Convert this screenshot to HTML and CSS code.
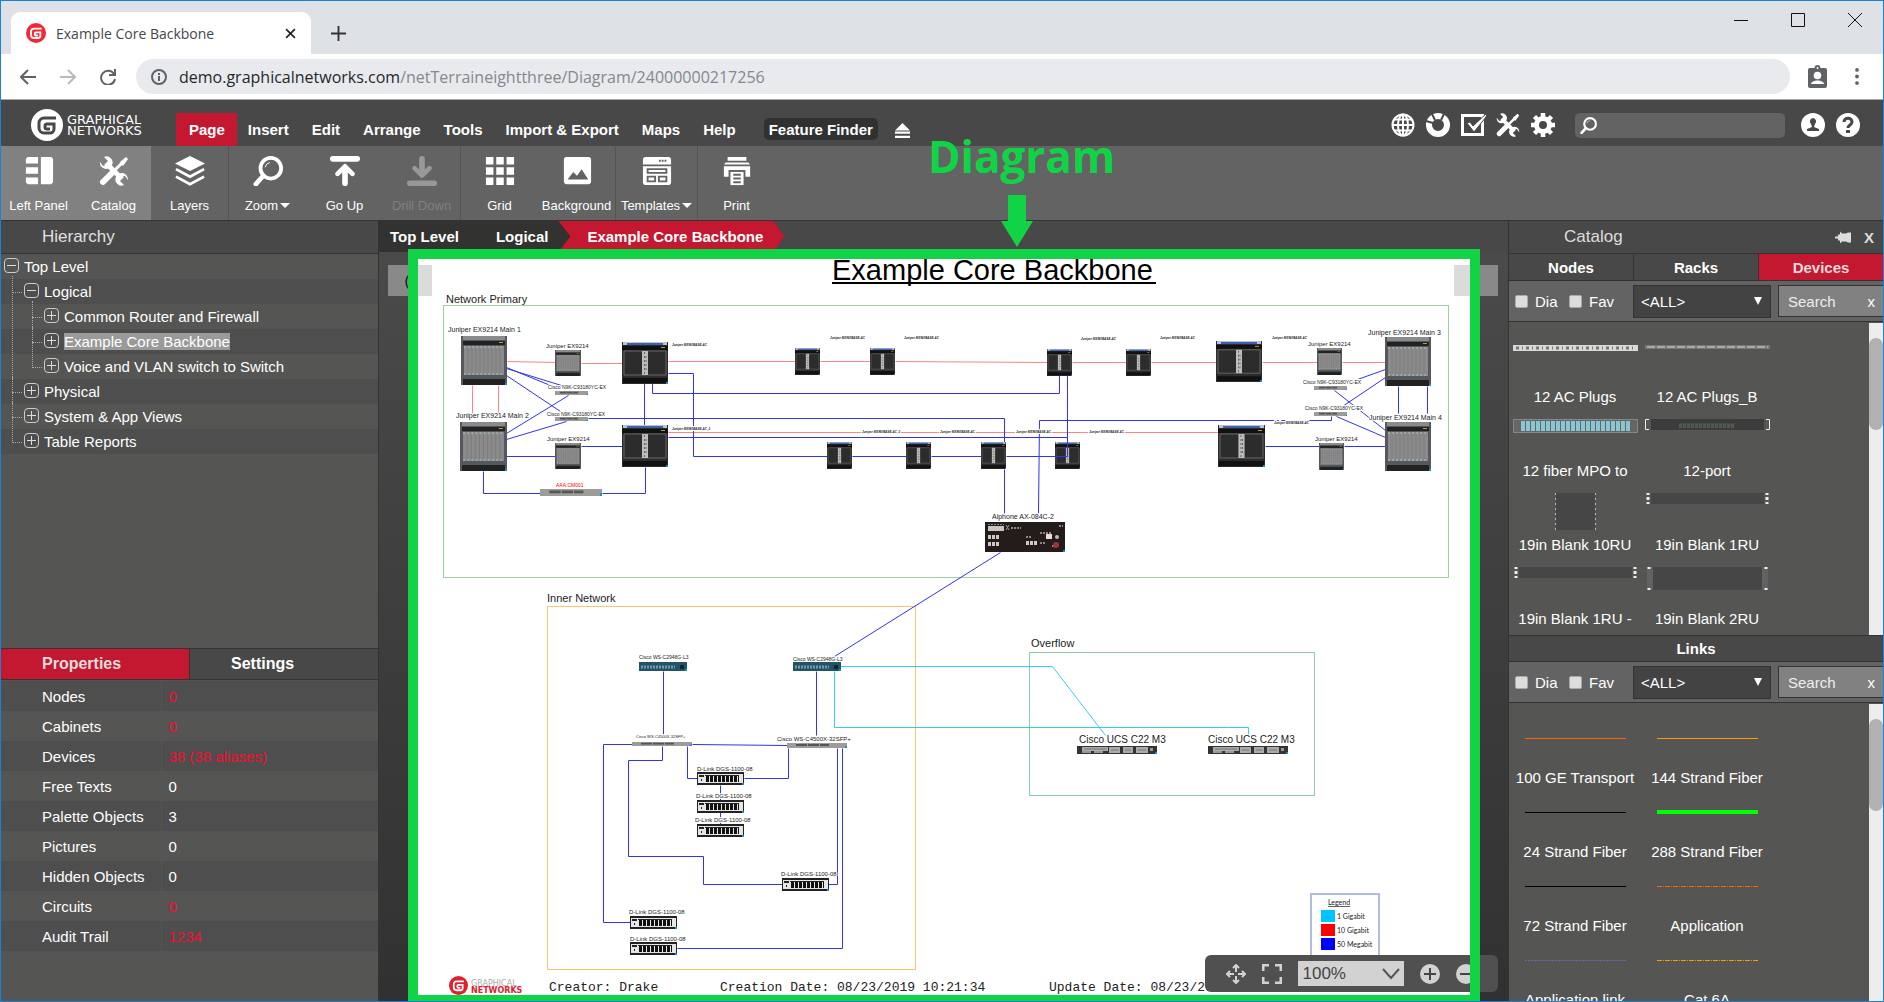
FILE: index.html
```html
<!DOCTYPE html>
<html lang="en">
<head>
<meta charset="utf-8">
<title>Example Core Backbone</title>
<link rel="stylesheet" href="styles.css">
</head>
<body>
<svg class="defs" aria-hidden="true">
  <symbol id="brand" viewBox="0 0 32 32"><circle cx="16" cy="16" r="16"/><path class="cut" d="M25 9H13a5 5 0 0 0-5 5v5a5 5 0 0 0 5 5h6a4 4 0 0 0 4-4v-5h-7a2 2 0 0 0-2 2v1a2 2 0 0 0 2 2h3"/></symbol>
  <symbol id="tools" viewBox="0 0 30 30"><path d="M7 7 23 23" stroke="currentColor" stroke-width="5"/><path fill="currentColor" d="M1 6a6 6 0 0 0 9 6l3-3a6 6 0 0 0-8-8l4 4-1 4-4 1zM29 24a6 6 0 0 0-9-6l-3 3a6 6 0 0 0 8 8l-4-4 1-4 4-1z"/><path d="M4 26 14 16" stroke="currentColor" stroke-width="6" stroke-linecap="round"/><path d="M13 17 24 6" stroke="currentColor" stroke-width="3"/><path d="m21 6 6-5 2 2-5 7z" fill="currentColor"/></symbol>
  <symbol id="glass" viewBox="0 0 32 32"><circle cx="19" cy="13" r="11" fill="none" stroke="currentColor" stroke-width="4"/><path d="M13 12a6 6 0 0 1 5-5" fill="none" stroke="currentColor"/><path d="M3 30 11 21" stroke="currentColor" stroke-width="5" stroke-linecap="round"/></symbol>
  <symbol id="chassis" viewBox="0 0 46 49" preserveAspectRatio="none"><path fill="#55585c" d="M0 0h46v49H0z"/><path fill="#8b8b8b" d="M2 0h42v4H2zM3 10h40v29H3z"/><path fill="#222" d="M2 5h42v4H2zM2 43h42v6H2z"/><path stroke="#7c7c7c" d="M7 10v29M11 10v29M15 10v29M19 10v29M23 10v29M27 10v29M31 10v29M35 10v29M39 10v29"/><path stroke="#a9c4cc" stroke-dasharray="2 2" d="M3 11h40M3 38h40"/><path fill="#b7a339" d="M38 6h4v1h-4z"/><path fill="#1590cf" d="M44 47h2v2h-2z"/></symbol>
  <symbol id="router" viewBox="0 0 46 42" preserveAspectRatio="none"><path fill="#2c2c2c" d="M0 0h46v42H0z"/><path fill="#bcc3d2" d="M1 0h44v3H1z"/><path fill="#3d5fae" d="M5 1h36v2H5z"/><path fill="#111" d="M0 4h46v4H0zM1 36h44v5H1z"/><path stroke="#666" fill="none" d="M2 9h42v24H2z"/><path fill="#bdbdbd" d="M20 9h6v24h-6z"/><path stroke="#666" stroke-dasharray="2 2" d="M22.500 10v22M24 14v16"/><path fill="#b7a339" d="M39 5h4v1h-4z"/><path fill="#1590cf" d="M44 40h2v2h-2z"/></symbol>
  <symbol id="slim" viewBox="0 0 60 5" preserveAspectRatio="none"><path fill="#9c9d98" d="M0 0h60v5H0z"/><path stroke="#555" stroke-width="2" stroke-dasharray="11 1" d="M9 2h33"/><path fill="#1590cf" d="M58 3h2v2h-2z"/></symbol>
  <symbol id="c2948" viewBox="0 0 48 9" preserveAspectRatio="none"><path fill="#215469" d="M0 0h48v9H0z"/><path stroke="#7b99a5" stroke-width="3" stroke-dasharray="2 1" d="M2 5h34"/><path fill="#10242e" d="M41 3h4v4h-4z"/><path fill="#1590cf" d="M46 7h2v2h-2z"/></symbol>
  <symbol id="dlink" viewBox="0 0 47 13"><path fill="#222" d="M0 0h47v13H0z"/><path fill="#e6e6e6" d="M1 2h45v9H1z"/><path stroke="#111" stroke-width="6" stroke-dasharray="3 1" d="M9 7h33"/><path fill="#222" d="M2 3h5v2H2zM4 7h1v2H4zM8 3h34v1H8z"/><path fill="#1590cf" d="M45 11h2v2h-2z"/></symbol>
  <symbol id="ucs" viewBox="0 0 80 8"><path fill="#333" d="M0 0h80v8H0z"/><path fill="#aaa" d="M5 1h26v4H5zM32 1h11v6H32zM46 1h10v6H46zM59 1h12v6H59z"/><path fill="#999" d="M5 5h9v2H5zM17 5h9v2h-9zM73 2h3v3h-3z"/><path stroke="#777" d="M7 3h22M34 4h7M48 4h6M61 4h8"/><path fill="#1590cf" d="M78 6h2v2h-2z"/></symbol>
</svg>

<header class="browser">
  <div class="tabstrip">
    <div class="tab"><svg class="favicon"><use href="#brand"/></svg><span>Example Core Backbone</span>
      <button class="tab-close" aria-label="Close tab"><svg viewBox="0 0 10 10"><path d="M1 1l8 8M9 1l-8 8"/></svg></button></div>
    <button class="newtab" aria-label="New tab"><svg viewBox="0 0 16 16"><path d="M8 0v16M0 8h16"/></svg></button>
    <div class="winctl">
      <button aria-label="Minimize"><svg viewBox="0 0 14 14"><path d="M0 7.500h14"/></svg></button>
      <button aria-label="Maximize"><svg viewBox="0 0 14 14"><path d="M.5.5h13v13H.5z"/></svg></button>
      <button aria-label="Close"><svg viewBox="0 0 14 14"><path d="M0 0l14 14M14 0 0 14"/></svg></button>
    </div>
  </div>
  <div class="navbar">
    <button aria-label="Back"><svg viewBox="0 0 16 16"><path d="M16 8H1M8 1 1 8l7 7"/></svg></button>
    <button class="off" aria-label="Forward"><svg viewBox="0 0 16 16"><path d="M0 8h15M8 1l7 7-7 7"/></svg></button>
    <button aria-label="Reload"><svg viewBox="0 0 16 16"><path d="M14 5a7 7 0 1 0 1 5M15 0v6H9"/></svg></button>
    <div class="omnibox"><svg class="info" viewBox="0 0 16 16"><circle cx="8" cy="8" r="7"/><path d="M8 7v5M8 4v2"/></svg>
      <div role="textbox" aria-label="Address">demo.graphicalnetworks.com<span>/netTerraineightthree/Diagram/24000000217256</span></div></div>
    <svg class="badge" viewBox="0 0 20 24"><path fill="#5f6368" d="M2 3h5a3 3 0 0 1 6 0h5a2 2 0 0 1 2 2v17a2 2 0 0 1-2 2H2a2 2 0 0 1-2-2V5a2 2 0 0 1 2-2z"/><circle cx="10" cy="3" r="1" fill="#fff"/><circle cx="10" cy="11" r="4" fill="#fff"/><path fill="#fff" d="M3 20c1-5 13-5 14 0z"/></svg>
    <svg class="dots" viewBox="0 0 4 18"><circle cx="2" cy="2" r="2"/><circle cx="2" cy="9" r="2"/><circle cx="2" cy="16" r="2"/></svg>
  </div>
</header>

<div class="apphead">
  <a class="logo" href="#"><svg><use href="#brand"/></svg><span>GRAPHICAL<br>NETWORKS</span></a>
  <nav class="menu">
    <a class="on" href="#">Page</a><a href="#">Insert</a><a href="#">Edit</a><a href="#">Arrange</a><a href="#">Tools</a><a href="#">Import &amp; Export</a><a href="#">Maps</a><a href="#">Help</a>
    <button class="finder">Feature Finder</button>
    <button class="eject" aria-label="Collapse ribbon"><svg viewBox="0 0 14 14"><path fill="#fff" d="M7 0l7 7H0zM0 8h14v2H0zM0 12h14v2H0z"/></svg></button>
  </nav>
  <div class="headtools">
    <button aria-label="Language"><svg viewBox="0 0 24 24" fill="none" stroke="#fff" stroke-width="2"><circle cx="12" cy="12" r="10.500"/><ellipse cx="12" cy="12" rx="5" ry="10.500"/><path d="M12 1v22M1 12h22M3 6.500h18M3 17.500h18"/></svg></button>
    <button aria-label="Status"><svg viewBox="0 0 24 24"><circle cx="12" cy="12" r="9" fill="none" stroke="#fff" stroke-width="6"/><path d="m6 1 3 6M18 1l-3 6M0 8l7 2" stroke="#484848" stroke-width="2"/></svg></button>
    <button aria-label="Tasks"><svg viewBox="0 0 24 24"><path d="M1.500 2.500h20v19h-20z" fill="none" stroke="#fff" stroke-width="3"/><path d="m6 10 3-1 3 4L26 0l-1 4-12 15z" fill="#fff" stroke="#484848"/></svg></button>
    <button aria-label="Tools"><svg><use href="#tools"/></svg></button>
    <button aria-label="Settings"><svg viewBox="0 0 24 24" fill="none" stroke="#fff"><circle cx="12" cy="12" r="6.500" stroke-width="5"/><path stroke-width="4.500" d="M12 0v4M12 20v4M0 12h4M20 12h4M3.500 3.500l3 3M17.500 17.500l3 3M3.500 20.500l3-3M17.500 6.500l3-3"/></svg></button>
    <label class="find"><svg><use href="#glass"/></svg><input type="text" aria-label="Find"></label>
    <button aria-label="Account"><svg viewBox="0 0 24 24"><circle cx="12" cy="12" r="12" fill="#fff"/><path fill="#484848" d="M12 5a3.500 3.500 0 0 1 2 6l-1 3 5 2v2H6v-2l5-2-1-3a3.500 3.500 0 0 1 2-6z"/></svg></button>
    <button aria-label="Help"><svg viewBox="0 0 24 24"><circle cx="12" cy="12" r="12" fill="#fff"/><path d="M8 9c0-5 8-5 8 0 0 3-4 3-4 6" fill="none" stroke="#484848" stroke-width="3"/><path fill="#484848" d="M10 17h4v3h-4z"/></svg></button>
  </div>
</div>

<div class="ribbon">
  <button class="on"><svg viewBox="0 0 32 32"><path fill="#fff" d="M4 1h11v7H2V3zM2 12h13v7H2zM2 23h13v7H4l-2-2zM18 1h11l2 2v25l-2 2H18z"/></svg>Left Panel</button>
  <button class="on"><svg><use href="#tools"/></svg>Catalog</button>
  <button class="sep"><svg viewBox="0 0 32 32"><path fill="#fff" d="M16 0 32 8 16 16 0 8z"/><path fill="none" stroke="#fff" stroke-width="3" d="m1 14 15 8 15-8M1 22l15 8 15-8"/></svg>Layers</button>
  <button><svg><use href="#glass"/></svg><span>Zoom<i></i></span></button>
  <button><svg viewBox="0 0 32 32"><path stroke="#fff" stroke-width="6" stroke-linecap="round" d="M3 3h26M16 13v16"/><path fill="none" stroke="#fff" stroke-width="5" stroke-linecap="round" stroke-linejoin="round" d="m8 19 8-8 8 8"/></svg>Go Up</button>
  <button class="sep" disabled><svg viewBox="0 0 32 32"><path stroke="#989898" stroke-width="6" stroke-linecap="round" d="M3 29h26M16 3v16"/><path fill="none" stroke="#989898" stroke-width="5" stroke-linecap="round" stroke-linejoin="round" d="m8 13 8 8 8-8"/></svg>Drill Down</button>
  <button><svg viewBox="0 0 32 32"><path stroke="#fff" stroke-width="8" stroke-dasharray="8 3" d="M1 5h30M1 16h30M1 27h30"/></svg>Grid</button>
  <button class="sep"><svg viewBox="0 0 32 32"><rect x="2" y="1" width="29" height="29" rx="3" fill="#fff"/><path fill="#636363" d="m6 25 6-8 4 4 5-7 7 11z"/></svg>Background</button>
  <button class="sep"><svg viewBox="0 0 32 32"><rect x="1" y="1" width="30" height="30" rx="3" fill="#fff"/><path fill="none" stroke="#636363" stroke-width="2" d="M1 10h30M6 14h20v4H6zM6 22h8v5H6zM18 22h8v5h-8z"/><path stroke="#636363" stroke-width="2" stroke-dasharray="2 1" d="M18 5h9"/></svg><span>Templates<i></i></span></button>
  <button><svg viewBox="0 0 32 32"><path fill="#fff" d="M6 1h20v4H6zM4 7h24l2 2H2zM2 11h28v11h-5v-7H7v7H2z"/><path fill="#fff" d="M9 17h14v14H9z"/><path stroke="#636363" stroke-width="2" d="M12 20h8M12 24h8M12 28h8"/></svg>Print</button>
</div>

<main class="work">
  <aside class="left">
    <h2 class="panelhead">Hierarchy</h2>
    <div class="treebox">
      <ul class="tree">
        <li><a href="#"><b class="minus"></b><span>Top Level</span></a>
          <ul>
            <li><a href="#"><b class="minus"></b><span>Logical</span></a>
              <ul>
                <li><a href="#"><b></b><span>Common Router and Firewall</span></a></li>
                <li><a href="#"><b></b><span class="sel">Example Core Backbone</span></a></li>
                <li><a href="#"><b></b><span>Voice and VLAN switch to Switch</span></a></li>
              </ul></li>
            <li><a href="#"><b></b><span>Physical</span></a></li>
            <li><a href="#"><b></b><span>System &amp; App Views</span></a></li>
            <li><a href="#"><b></b><span>Table Reports</span></a></li>
          </ul></li>
      </ul>
    </div>
    <div class="proptabs"><button class="on">Properties</button><button>Settings</button></div>
    <div class="propbox">
      <table class="props">
        <tr><th scope="row">Nodes</th><td><a href="#">0</a></td></tr>
        <tr><th scope="row">Cabinets</th><td><a href="#">0</a></td></tr>
        <tr><th scope="row">Devices</th><td><a href="#">38 (38 aliases)</a></td></tr>
        <tr><th scope="row">Free Texts</th><td>0</td></tr>
        <tr><th scope="row">Palette Objects</th><td>3</td></tr>
        <tr><th scope="row">Pictures</th><td>0</td></tr>
        <tr><th scope="row">Hidden Objects</th><td>0</td></tr>
        <tr><th scope="row">Circuits</th><td><a href="#">0</a></td></tr>
        <tr><th scope="row">Audit Trail</th><td><a href="#">1234</a></td></tr>
      </table>
    </div>
  </aside>

  <section class="center">
    <nav class="crumbs"><a href="#">Top Level</a><a href="#">Logical</a><a class="here" href="#">Example Core Backbone</a></nav>
    <div class="stage">
      <div class="canvas">
        <button class="handle prev" aria-label="Previous">(</button>
        <button class="handle next" aria-label="Next"></button>
        <svg class="diagram" viewBox="408 252 1072 750">
          <text class="title" x="832" y="280">Example Core Backbone</text>
          <path d="M832 283h324" stroke="#000" stroke-width="2"/>
          <g class="areas"><path stroke="#9fce9f" d="M443 305h1005v272H443z"/><path stroke="#ffc36e" d="M547 606h368v363H547z"/><path stroke="#8cccaa" d="M1029 652h285v143h-285z"/></g>
          <g class="group"><text x="446" y="303">Network Primary</text><text x="547" y="602">Inner Network</text><text x="1031" y="647">Overflow</text></g>
          <g class="red" transform="translate(.5 .5)"><path d="M507 361l48 1M581 363h41M668 361h127M820 361h50M895 361l152 1M1072 362h54M1151 362h65M1262 362h55M1342 362h43M472 385v28M498 385v28M668 432h550"/></g>
          <g class="blue" transform="translate(.5 .5)"><path d="M506 368l55 17M506 367l44 18M506 375l54 36M506 433l62-38M506 439l60-18M506 456h49M581 446h41M483 471v22h57M602 493h43v-26M644 383v42M652 383v10h407v-18M668 373h25v83h134M852 456h54M931 456h50M1006 456h49M588 418h416v24M1004 469v44M668 437h399M1038 513l1-93h292v-4M1265 446h54M1344 446h41M1398 386v27M1427 386v27M1357 379l28-10M1385 377l-43 29M1334 390l51 40M1336 416l49 21M1000 552 834 656"/>
            <path d="M663 671v63M662 746v14h-34v96h75v28h79M632 744h-29v178h27M692 744l95 1M687 746v32h10M744 778h44v-30M720 785v15M720 812v12M816 671v64M837 748v136h-9M842 748v200H677"/></g>
          <path class="cyan" transform="translate(.5 .5)" d="M840 666h212l53 69M834 671v56h394v0h20v8"/>
          <g><use href="#chassis" x="461" y="336" width="46" height="49"/><use href="#chassis" x="460" y="422" width="47" height="49"/><use href="#chassis" x="1385" y="337" width="46" height="49"/><use href="#chassis" x="1385" y="422" width="46" height="49"/>
          <use href="#chassis" x="555" y="350" width="26" height="26"/><use href="#chassis" x="555" y="443" width="26" height="26"/><use href="#chassis" x="1317" y="348" width="25" height="27"/><use href="#chassis" x="1319" y="443" width="25" height="27"/></g>
          <g><use href="#router" x="622" y="342" width="46" height="42"/><use href="#router" x="622" y="425" width="46" height="42"/><use href="#router" x="1216" y="341" width="46" height="41"/><use href="#router" x="1218" y="425" width="47" height="42"/>
          <use href="#router" x="795" y="348" width="25" height="27"/><use href="#router" x="870" y="348" width="25" height="27"/><use href="#router" x="1047" y="349" width="25" height="27"/><use href="#router" x="1126" y="349" width="25" height="27"/>
          <use href="#router" x="827" y="442" width="25" height="27"/><use href="#router" x="906" y="442" width="25" height="27"/><use href="#router" x="981" y="442" width="25" height="27"/><use href="#router" x="1055" y="442" width="25" height="27"/></g>
          <path class="blue" transform="translate(.5 .5)" d="M1067 375v81h-12"/>
          <g><use href="#slim" x="555" y="391" width="33" height="4"/><use href="#slim" x="555" y="417" width="33" height="4"/><use href="#slim" x="1314" y="386" width="33" height="4"/><use href="#slim" x="1314" y="412" width="33" height="4"/><use href="#slim" x="540" y="489" width="62" height="7"/><use href="#slim" x="632" y="742" width="60" height="4"/><use href="#slim" x="787" y="743" width="60" height="5"/>
          <use href="#c2948" x="639" y="662" width="48" height="9"/><use href="#c2948" x="793" y="662" width="48" height="9"/>
          <use href="#dlink" x="697" y="772" width="47" height="13"/><use href="#dlink" x="697" y="800" width="47" height="13"/><use href="#dlink" x="697" y="824" width="47" height="13"/><use href="#dlink" x="782" y="878" width="47" height="13"/><use href="#dlink" x="630" y="916" width="47" height="13"/><use href="#dlink" x="630" y="942" width="47" height="13"/>
          <use href="#ucs" x="1077" y="746" width="80" height="8"/><use href="#ucs" x="1208" y="746" width="80" height="8"/></g>
          <g><path fill="#241c1b" d="M985 522h80v30h-80z"/><path fill="#c8c4c0" d="M988 526h16v5h-16z"/><path stroke="#888" stroke-dasharray="2 1" d="M988 524.500h16M1020 528.500"/><path stroke="#cfc9c4" stroke-width="4" stroke-dasharray="3 1" d="M988 537h11M988 544h11M1026 543h12"/><path stroke="#8d8783" stroke-width="2" stroke-dasharray="2 1" d="M1011 528h10M1040 533h12M1026 537h6M1040 543h6M1052 546h2M1059 526h4"/><path fill="#e8ddd0" d="M1046 534h6v5h-6z"/><circle cx="1056" cy="545" r="3" fill="#a03434"/><circle cx="1057" cy="537" r="2" fill="#bbb"/><path d="M1006 525l3 5M1009 525l-3 5" stroke="#999"/><path fill="#1590cf" d="M1063 550h2v2h-2z"/></g>
          <g class="s7"><text x="448" y="332">Juniper EX9214 Main 1</text><text x="456" y="418">Juniper EX9214 Main 2</text><text x="1368" y="335">Juniper EX9214 Main 3</text><text x="1369" y="420">Juniper EX9214 Main 4</text><text x="992" y="519">Aiphone AX-084C-2</text></g>
          <g class="s6"><text x="546" y="348">Juniper EX9214</text><text x="547" y="441">Juniper EX9214</text><text x="1308" y="346">Juniper EX9214</text><text x="1315" y="441">Juniper EX9214</text>
          <text x="697" y="771">D-Link DGS-1100-08</text><text x="696" y="798">D-Link DGS-1100-08</text><text x="695" y="822">D-Link DGS-1100-08</text><text x="781" y="876">D-Link DGS-1100-08</text><text x="629" y="914">D-Link DGS-1100-08</text><text x="630" y="941">D-Link DGS-1100-08</text><text x="777" y="741">Cisco WS-C4500X-32SFP+</text></g>
          <g class="s5"><text x="548" y="389">Cisco N9K-C93180YC-EX</text><text x="547" y="416">Cisco N9K-C93180YC-EX</text><text x="1303" y="384">Cisco N9K-C93180YC-EX</text><text x="1305" y="410">Cisco N9K-C93180YC-EX</text><text x="639" y="659">Cisco WS-C2948G-L3</text><text x="793" y="661">Cisco WS-C2948G-L3</text><text x="556" y="487" class="warn">AAA.CM001</text></g>
          <g class="s4"><text x="636" y="738">Cisco WS-C4500X-32SFP+</text></g>
          <g class="s3"><text x="672" y="346">Juniper MX960BASE-AC</text><text x="830" y="339">Juniper MX960BASE-AC</text><text x="904" y="339">Juniper MX960BASE-AC</text><text x="1081" y="340">Juniper MX960BASE-AC</text><text x="1160" y="339">Juniper MX960BASE-AC</text><text x="1272" y="339">Juniper MX960BASE-AC</text><text x="672" y="430">Juniper MX960BASE-AC_2</text><text x="862" y="433">Juniper MX960BASE-AC_2</text><text x="940" y="433">Juniper MX960BASE-AC</text><text x="1016" y="433">Juniper MX960BASE-AC</text><text x="1089" y="433">Juniper MX960BASE-AC</text><text x="1274" y="424">Juniper MX960BASE-AC</text></g>
          <g class="s10"><text x="1079" y="743">Cisco UCS C22 M3</text><text x="1208" y="743">Cisco UCS C22 M3</text></g>
          <path fill="#fff" stroke="#b3bce0" stroke-width="2" d="M1311 894h68v80h-68z"/>
          <path fill="#00c4ff" d="M1321 910h14v12h-14z"/><path fill="#f00" d="M1321 924h14v12h-14z"/><path fill="#00f" d="M1321 938h14v12h-14z"/>
          <g class="legend"><text x="1328" y="905" text-decoration="underline">Legend</text><text x="1337" y="919">1 Gigabit</text><text x="1337" y="933">10 Gigabit</text><text x="1337" y="947">50 Megabit</text></g>
          <use class="redbrand" href="#brand" x="449" y="976" width="19" height="19"/>
          <g class="footlogo"><text x="471" y="986">GRAPHICAL</text><text x="471" y="993" font-weight="bold">NETWORKS</text></g>
          <g class="meta"><text x="549" y="991">Creator: Drake</text><text x="720" y="991">Creation Date: 08/23/2019 10:21:34</text><text x="1049" y="991">Update Date: 08/23/2019</text></g>
        </svg>
        <div class="zoombar">
          <button aria-label="Pan"><svg viewBox="0 0 20 20"><path d="M10 1v7M10 12v7M1 10h7M12 10h7M7 4l3-3 3 3M7 16l3 3 3-3M4 7l-3 3 3 3M16 7l3 3-3 3"/></svg></button>
          <button aria-label="Fit"><svg viewBox="0 0 20 20"><path stroke-width="3" d="M1 7V1h6M13 1h6v6M19 13v6h-6M7 19H1v-6"/></svg></button>
          <select aria-label="Zoom level"><option>100%</option></select>
          <button aria-label="Zoom in"><svg viewBox="0 0 20 20"><circle cx="10" cy="10" r="10"/><path class="ink" d="M10 4v12M4 10h12"/></svg></button>
          <button aria-label="Zoom out"><svg viewBox="0 0 20 20"><circle cx="10" cy="10" r="10"/><path class="ink" d="M4 10h12"/></svg></button>
        </div>
        <div class="frame"></div>
        <div class="callout"><span>Diagram</span><svg viewBox="0 0 32 52"><path d="M7 0h18v26h7L16 52 0 26h7z"/></svg></div>
      </div>
    </div>
  </section>

  <aside class="right">
    <div class="cathead"><h2>Catalog</h2><button aria-label="Pin"><svg viewBox="0 0 16 12"><path d="M0 5h3V3h2V0l2 2h4l2-1h3v10h-3l-2-1H7l-2 2V9H3V7H0z" fill="#ddd"/></svg></button><button class="close">X</button></div>
    <div class="cattabs"><button>Nodes</button><button>Racks</button><button class="on">Devices</button></div>
    <div class="filter"><label><input type="checkbox">Dia</label><label><input type="checkbox">Fav</label><select aria-label="Device type"><option>&lt;ALL&gt;</option></select><div class="search"><input type="text" placeholder="Search" aria-label="Search devices"><button>x</button></div></div>
    <div class="list devices">
      <div class="grid">
        <figure><svg viewBox="0 0 125 40"><path fill="#d9d9d9" d="M0 0h125v6H0z"/><path stroke="#777" stroke-width="3" stroke-dasharray="3 3 1 3" d="M3 3h120"/></svg><figcaption>12 AC Plugs</figcaption></figure>
        <figure><svg viewBox="0 0 125 40"><path fill="#777" d="M0 0h125v4H0z"/><path stroke="#aaa" stroke-width="2" stroke-dasharray="8 2" d="M2 2h121"/></svg><figcaption>12 AC Plugs_B</figcaption></figure>
        <figure><svg viewBox="0 0 125 40"><path fill="#666" stroke="#888" d="M.5.5h124v13H.5z"/><path stroke="#88c6d3" stroke-width="10" stroke-dasharray="4 1" d="M8 7h109"/></svg><figcaption>12 fiber MPO to</figcaption></figure>
        <figure><svg viewBox="0 0 125 40"><path fill="#3c3c3c" d="M6 0h113v11H6z"/><path stroke="#555" stroke-width="4" stroke-dasharray="3 1" d="M34 7h56"/><path stroke="#3f6b3f" d="M34 5h56"/><path fill="none" stroke="#eee" d="M4 .5H.5v10H4M121 .5h3.500v10H121"/></svg><figcaption>12-port</figcaption></figure>
        <figure><svg viewBox="0 0 125 40"><path fill="#464646" d="M43 0h39v37H43z"/><path stroke="#bbb" stroke-dasharray="2 3" d="M42.500 0v37M82.500 0v37"/></svg><figcaption>19in Blank 10RU</figcaption></figure>
        <figure><svg viewBox="0 0 125 40"><path fill="#464646" d="M6 0h113v11H6z"/><path stroke="#eee" stroke-width="3" stroke-dasharray="2 2 3 2 2" d="M3 0v11M122 0v11"/></svg><figcaption>19in Blank 1RU</figcaption></figure>
        <figure><svg viewBox="0 0 125 40"><path fill="#464646" d="M6 0h113v11H6z"/><path stroke="#eee" stroke-width="3" stroke-dasharray="2 2 3 2 2" d="M3 0v11M122 0v11"/></svg><figcaption>19in Blank 1RU -</figcaption></figure>
        <figure><svg viewBox="0 0 125 40"><path fill="#626262" d="M2 0h121v23H2z"/><path fill="#464646" d="M8 0h109v23H8z"/><path stroke="#eee" stroke-width="3" stroke-dasharray="2 19" d="M4 0v23M121 0v23"/></svg><figcaption>19in Blank 2RU</figcaption></figure>
      </div><div class="bar"><i></i></div>
    </div>
    <h3 class="linkhead">Links</h3>
    <div class="filter"><label><input type="checkbox">Dia</label><label><input type="checkbox">Fav</label><select aria-label="Link type"><option>&lt;ALL&gt;</option></select><div class="search"><input type="text" placeholder="Search" aria-label="Search links"><button>x</button></div></div>
    <div class="list links">
      <div class="grid">
        <figure><svg viewBox="0 0 101 28"><path stroke="#ff6600" d="M0 5.500h101"/></svg><figcaption>100 GE Transport</figcaption></figure>
        <figure><svg viewBox="0 0 101 28"><path stroke="#ff9900" d="M0 5.500h101"/></svg><figcaption>144 Strand Fiber</figcaption></figure>
        <figure><svg viewBox="0 0 101 28"><path stroke="#000" d="M0 5.500h101"/></svg><figcaption>24 Strand Fiber</figcaption></figure>
        <figure><svg viewBox="0 0 101 28"><path stroke="#00ff00" stroke-width="4" d="M0 5h101"/></svg><figcaption>288 Strand Fiber</figcaption></figure>
        <figure><svg viewBox="0 0 101 28"><path stroke="#000" d="M0 5.500h101"/></svg><figcaption>72 Strand Fiber</figcaption></figure>
        <figure><svg viewBox="0 0 101 28"><path stroke="#ff6600" stroke-dasharray="5 1 1 1" d="M0 5.500h101"/></svg><figcaption>Application</figcaption></figure>
        <figure><svg viewBox="0 0 101 28"><path stroke="#6666aa" stroke-dasharray="2 1" d="M0 5.500h101"/></svg><figcaption>Application link</figcaption></figure>
        <figure><svg viewBox="0 0 101 28"><path stroke="#ff9900" stroke-dasharray="5 1 1 1" d="M0 5.500h101"/></svg><figcaption>Cat 6A</figcaption></figure>
      </div><div class="bar"><i></i></div>
    </div>
  </aside>
</main>
</body>
</html>
```
FILE: styles.css
```css
* { box-sizing: border-box; }
body { margin: 0; height: 100vh; display: flex; flex-direction: column; overflow: hidden; border: 1px solid #1883d7; background: #484848; color: #fff; font: 15px "Liberation Sans", Arial, sans-serif; }
button, input, select { font: inherit; color: inherit; }
button { margin: 0; padding: 0; border: 0; background: none; display: flex; align-items: center; justify-content: center; }
a { color: inherit; text-decoration: none; }
h2, h3, ul, figure { margin: 0; padding: 0; font-weight: normal; }
svg { display: block; }
.defs { position: absolute; width: 0; height: 0; }
.cut { fill: none; stroke: var(--cut, #fff); stroke-width: 3; }

/* browser window */
.tabstrip { height: 53px; background: #dee1e6; display: flex; align-items: flex-end; padding-left: 10px; }
.tab { width: 300px; height: 42px; background: #fff; border-radius: 9px 9px 0 0; display: flex; align-items: center; gap: 10px; padding: 0 15px; color: #45484c; font: 14px "Open Sans", "Noto Sans", sans-serif; }
.tab span { flex: 1; }
.favicon { width: 20px; height: 20px; fill: #f32735; }
.tab-close svg { width: 11px; height: 11px; stroke: #222; stroke-width: 1.5px; }
.newtab { height: 42px; padding-left: 20px; }
.newtab svg { width: 15px; height: 15px; stroke: #333; stroke-width: 2; }
.winctl { margin-left: auto; align-self: flex-start; display: flex; gap: 43px; padding: 12px 21px 0 0; }
.winctl svg { width: 14px; height: 14px; stroke: #111; fill: none; }
.navbar { height: 46px; background: #fff; border-bottom: 1px solid #a9a9a9; display: flex; align-items: center; padding: 0 24px 0 19px; gap: 24px; }
.navbar button svg { width: 16px; height: 16px; fill: none; stroke: #5f6368; stroke-width: 2; }
.navbar .off svg { stroke: #bbb; }
.omnibox { flex: 1; height: 35px; margin-left: -4px; border-radius: 18px; background: #e8eaed; display: flex; align-items: center; gap: 12px; padding-left: 15px; color: #26282b; font: 16px "Open Sans", "Noto Sans", sans-serif; }
.omnibox span { color: #85888c; }
.info { width: 16px; height: 16px; fill: none; stroke: #5f6368; stroke-width: 2; }
.badge { width: 19px; height: 23px; margin: 0 4px 0 -6px; }
.dots { width: 4px; height: 17px; fill: #5f6368; }

/* application header */
.apphead { height: 46px; display: flex; background: #484848; }
.logo { width: 175px; padding: 9px 0 0 30px; display: flex; gap: 4px; font: 13px/11px "DejaVu Sans", sans-serif; --cut: #484848; }
.logo svg { width: 32px; height: 32px; flex: none; fill: #fff; }
.logo span { padding-top: 5px; }
.menu { display: flex; align-items: flex-end; font-weight: bold; white-space: nowrap; }
.menu a { height: 33px; line-height: 33px; padding: 0 12px 0 11px; }
.menu a.on { background: #c3182f; padding: 0 12px 0 13px; }
.finder { height: 22px; margin: 0 17px 6px 16px; padding: 0 5px; border-radius: 5px; background: #313131; font-weight: bold; }
.eject { height: 22px; margin-bottom: 5px; }
.eject svg { width: 15px; height: 15px; }
.headtools { margin-left: auto; height: 50px; display: flex; align-items: center; gap: 11px; padding-right: 23px; }
.headtools button svg { width: 24px; height: 24px; overflow: visible; }
.find { width: 210px; height: 25px; margin: 0 5px 0 9px; border-radius: 5px; background: #636363; display: flex; align-items: center; padding-left: 5px; }
.find svg { width: 17px; height: 17px; flex: none; }
.find input { width: 100%; border: 0; background: none; }

/* ribbon */
.ribbon { height: 75px; flex: none; display: flex; background: #636363; border-bottom: 1px solid #333; font-size: 13px; }
.ribbon button { width: 77px; flex-direction: column; justify-content: flex-start; gap: 11px; padding-top: 9px; white-space: nowrap; }
.ribbon svg { width: 32px; height: 32px; padding: 1px; }
.ribbon button.on { width: 75px; background: #818181; }
.ribbon .sep { width: 78px; border-right: 1px solid #545454; }
.ribbon .sep + .sep { width: 82px; }
.ribbon button:disabled { color: #808080; }
.ribbon i { display: inline-block; margin-left: 2px; border: 5px solid transparent; border-top-color: #fff; border-bottom: 0; vertical-align: 2px; }

/* work area */
.work { flex: 1; min-height: 0; display: flex; }
.left { width: 378px; flex: none; display: flex; flex-direction: column; border-right: 1px solid #333; background: #555553; }
.panelhead { height: 33px; background: #484848; border-bottom: 1px solid #333; padding-left: 41px; font-size: 17px; line-height: 31px; color: #e0e0e0; }
.treebox { flex: 1; }
.tree, .tree ul { list-style: none; }
.tree { padding-left: 0; background: repeating-linear-gradient(#555553 0 25px, #4e4e4e 25px 50px); }
.tree ul { padding-left: 20px; }
.tree li { position: relative; }
.tree a { display: flex; align-items: center; height: 25px; padding-left: 3px; gap: 5px; }
.tree a b { position: relative; width: 15px; height: 15px; margin-top: -3px; border: 1px solid #ccc; border-radius: 4px; }
.tree a b::before { content: ""; position: absolute; left: 2px; top: 6px; width: 9px; height: 1px; background: #ddd; }
.tree a b:not(.minus)::after { content: ""; position: absolute; left: 6px; top: 2px; width: 1px; height: 9px; background: #ddd; }
.tree .sel { background: #9a9a9a; }
.tree ul > li::before { content: ""; position: absolute; left: -9px; top: -3px; bottom: 0; border-left: 1px dotted #aaa; }
.tree ul > li:last-child::before { bottom: auto; height: 17px; }
.tree ul > li::after { content: ""; position: absolute; left: -9px; top: 13px; width: 10px; border-top: 1px dotted #aaa; }
.proptabs { display: flex; height: 32px; border-top: 1px solid #333; border-bottom: 1px solid #333; background: #484848; font-size: 16px; margin-bottom: 1px; }
.proptabs button { flex: 1; justify-content: flex-start; padding-left: 41px; font-weight: bold; }
.proptabs .on { background: #c3182f; border-right: 1px solid #333; color: #e6dcdc; }
.propbox { height: 320px; }
.props { width: 100%; border-collapse: collapse; }
.props tr { height: 30px; }
.props tr:nth-child(odd) { background: #4e4e4e; }
.props th { width: 160px; padding: 0 0 0 41px; text-align: left; font-weight: normal; border-right: 1px solid #555553; }
.props td { padding: 0 0 0 7px; }
.props td a { color: #f40f2f; }

.center { flex: 1; min-width: 0; display: flex; flex-direction: column; background: linear-gradient(#4b4b4b, #313131); }
.crumbs { height: 31px; flex: none; display: flex; font-weight: bold; line-height: 31px; background: #484848; }
.crumbs a { height: 31px; padding: 0 26px 0 11px; background: #323230; }
.crumbs .here { margin-left: -16px; padding: 0 21px 0 29px; background: #c3182f; clip-path: polygon(0 0, calc(100% - 11px) 0, 100% 50%, calc(100% - 11px) 100%, 0 100%, 12px 50%); }
.stage { flex: 1; min-height: 0; display: flex; justify-content: center; }
.canvas { position: relative; width: 1072px; flex: none; background: #fff; }
.diagram { width: 1072px; height: 750px; }
.diagram text { fill: #222; }
.diagram .title { font-size: 29px; fill: #000; }
.group { font-size: 11px; }
.areas { fill: none; stroke-width: 1px; shape-rendering: crispEdges; }
.red { fill: none; stroke: #ff8484; stroke-width: 1px; }
.blue { fill: none; stroke: #3232f5; stroke-width: 1px; }
.cyan { fill: none; stroke: #2fcdf8; stroke-width: 1px; }
.s3, .s4, .s5, .s6, .s7, .s10 { paint-order: stroke; stroke: #fff; stroke-width: 2px; }
.s3 { font: italic bold 3px "Liberation Sans", sans-serif; }
.s4 { font-size: 4px; }
.s5 { font-size: 5px; }
.s6 { font-size: 6px; }
.s7 { font-size: 7px; }
.s10 { font-size: 10px; }
.diagram .warn { fill: #f00; }
.legend { font: 7px Lato, sans-serif; }
.redbrand { fill: #e0202c; }
.footlogo { font: 8px "DejaVu Sans", sans-serif; }
.diagram .footlogo text { fill: #aaa; }
.diagram .footlogo text + text { fill: #e0202c; }
.meta { font: 13px "Liberation Mono", monospace; }
.handle { position: absolute; top: 13px; width: 44px; height: 31px; background: rgba(190, 190, 190, .55); color: #111; }
.prev { left: -20px; justify-content: flex-start; padding-left: 17px; }
.next { right: -18px; }
.zoombar { position: absolute; right: -18px; top: 703px; width: 293px; height: 37px; border-radius: 6px; background: #505050; display: flex; align-items: center; gap: 16px; padding-left: 21px; }
.zoombar svg { width: 20px; height: 20px; fill: none; stroke: #d2d2d2; stroke-width: 2; }
.zoombar circle { fill: #d2d2d2; stroke: none; }
.zoombar .ink { stroke: #444; }
.zoombar select { appearance: none; width: 106px; height: 25px; border: 0; padding: 0 5px; color: #444; font-size: 17px; background: #d2d2d2 url("data:image/svg+xml,%3Csvg xmlns='http://www.w3.org/2000/svg' width='18' height='12'%3E%3Cpath d='M1 1l8 9 8-9' fill='none' stroke='%23555' stroke-width='2'/%3E%3C/svg%3E") no-repeat right 4px center; }
.frame { position: absolute; inset: -3px 0 0; border: 10px solid #10d445; border-bottom-width: 6px; pointer-events: none; }
.callout { position: absolute; left: 521px; bottom: calc(100% + 5px); width: 186px; display: flex; flex-direction: column; align-items: center; font: bold 44px/60px "Open Sans", sans-serif; color: #10d445; z-index: 2; }
.callout svg { width: 32px; height: 52px; margin-top: 9px; margin-right: 10px; fill: #10d445; }

/* catalog */
.right { width: 375px; flex: none; display: flex; flex-direction: column; border-left: 1px solid #333; background: #555553; }
.cathead { height: 33px; flex: none; display: flex; align-items: center; gap: 13px; background: #484848; border-bottom: 1px solid #333; padding: 0 9px 0 55px; color: #ddd; }
.cathead h2 { flex: 1; font-size: 17px; }
.cathead svg { width: 16px; height: 13px; }
.close { font-weight: bold; }
.cattabs { height: 27px; flex: none; display: flex; background: #484848; border-bottom: 1px solid #333; }
.cattabs button { flex: 1; font-weight: bold; border-right: 1px solid #333; }
.cattabs .on { background: #c3182f; border: 0; color: #eadada; }
.filter { height: 41px; flex: none; display: flex; align-items: center; background: #636363; border-bottom: 1px solid #333; padding-left: 6px; }
.filter label { width: 54px; flex: none; display: flex; align-items: center; gap: 7px; }
.filter label + label { width: 64px; }
.filter input[type="checkbox"] { appearance: none; width: 13px; height: 13px; margin: 0; border: 1px solid #aaa; border-radius: 2px; background: #ddd; }
.filter select { appearance: none; flex: none; width: 138px; height: 33px; border: 1px solid #333; padding: 0 7px; background: #434343 url("data:image/svg+xml,%3Csvg xmlns='http://www.w3.org/2000/svg' width='8' height='8'%3E%3Cpath d='M0 0h8L4 8z' fill='white'/%3E%3C/svg%3E") no-repeat right 8px center; }
.search { flex: 1; min-width: 0; height: 32px; margin-left: 7px; display: flex; background: #818181; border: 1px solid #333; border-right: 0; padding: 0 8px 0 9px; }
.search input { flex: 1; width: 0; min-width: 0; padding: 0; border: 0; background: none; }
.search input::placeholder { color: #eee; opacity: 1; }
.list { display: flex; justify-content: space-between; overflow: hidden; }
.grid { display: grid; grid-template-columns: 132px 132px; grid-auto-rows: 74px; text-align: center; white-space: nowrap; }
.devices { height: 313px; flex: none; }
.devices .grid { padding-top: 23px; }
.devices svg { width: 125px; height: 40px; margin: 0 auto 3px; }
.links { flex: 1; min-height: 0; }
.links .grid { padding-top: 30px; }
.links svg { width: 101px; height: 28px; margin: 0 auto 8px; }
.bar { width: 14px; margin-top: 1px; background: #ededed; padding-top: 15px; flex: none; }
.bar i { display: block; height: 92px; border-radius: 7px; background: #b1b1b1; }
.linkhead { height: 27px; flex: none; background: #484848; border-top: 1px solid #333; border-bottom: 1px solid #333; font-size: 15px; font-weight: bold; line-height: 25px; text-align: center; }
```
